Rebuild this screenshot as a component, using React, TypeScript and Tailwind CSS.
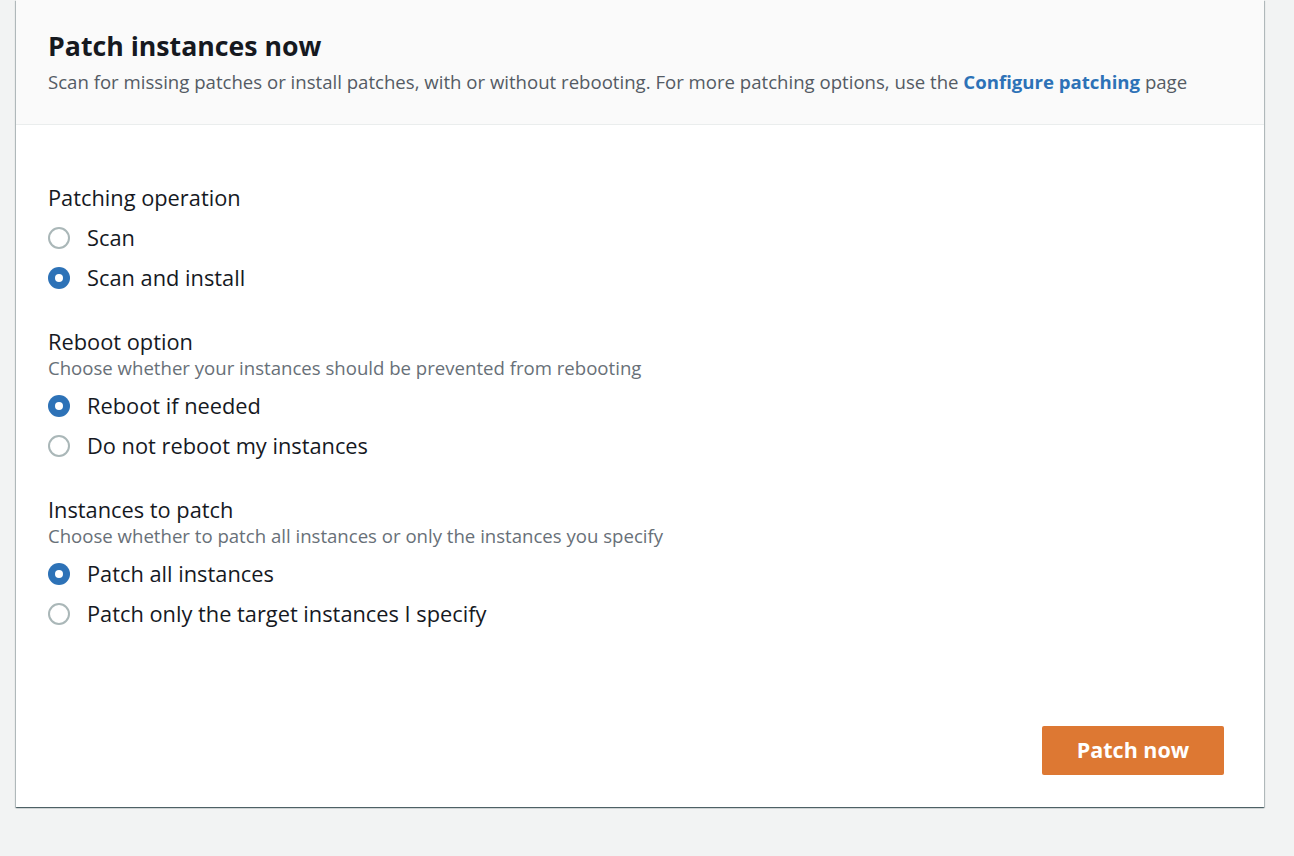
import { useState } from 'react';

type Option = { value: string; label: string };

function Radio({ checked, label, onClick }: { checked: boolean; label: string; onClick: () => void }) {
  return (
    <button type="button" onClick={onClick} className="flex h-[40px] items-center text-left">
      {checked ? (
        <span className="flex h-[22px] w-[22px] items-center justify-center rounded-full bg-[#2d72b7]">
          <span className="h-[8px] w-[8px] rounded-full bg-white" />
        </span>
      ) : (
        <span className="h-[22px] w-[22px] rounded-full border-2 border-[#aab7b8] bg-white" />
      )}
      <span className="ml-[17px] text-[21.8px] leading-[28px] text-[#16191f]">{label}</span>
    </button>
  );
}

function RadioGroup({
  title,
  description,
  options,
  value,
  onChange,
}: {
  title: string;
  description?: string;
  options: Option[];
  value: string;
  onChange: (v: string) => void;
}) {
  return (
    <div className="flex flex-col">
      <div className="text-[21.8px] leading-[28px] text-[#16191f]">{title}</div>
      {description && <div className="text-[18.6px] leading-[24px] text-[#687078]">{description}</div>}
      <div className="mt-[6px] flex flex-col">
        {options.map((o) => (
          <Radio key={o.value} checked={value === o.value} label={o.label} onClick={() => onChange(o.value)} />
        ))}
      </div>
    </div>
  );
}

export default function App() {
  const [operation, setOperation] = useState('install');
  const [reboot, setReboot] = useState('reboot');
  const [targets, setTargets] = useState('all');

  return (
    <div className="h-[856px] w-full overflow-hidden bg-[#f2f3f3] font-['Open_Sans',sans-serif]">
      <div className="ml-[16px] w-[1248px] bg-white shadow-[0_1px_1px_0_rgba(0,28,36,0.5),1px_1px_1px_0_rgba(0,28,36,0.2),-1px_1px_1px_0_rgba(0,28,36,0.2)]">
        {/* Header */}
        <div className="border-b border-[#eaeded] bg-[#fafafa] px-[32px] pt-[28px] pb-[29px]">
          <h2 className="text-[26.7px] font-bold leading-[36px] text-[#16191f]">Patch instances now</h2>
          <p className="mt-[5px] text-[18.6px] leading-[26px] text-[#545b64]">
            Scan for missing patches or install patches, with or without rebooting. For more patching options, use the{' '}
            <a href="#" className="font-bold text-[#2d72b7]">
              Configure patching
            </a>{' '}
            page
          </p>
        </div>

        {/* Body */}
        <div className="flex flex-col gap-[30px] px-[32px] pt-[59px]">
          <RadioGroup
            title="Patching operation"
            options={[
              { value: 'scan', label: 'Scan' },
              { value: 'install', label: 'Scan and install' },
            ]}
            value={operation}
            onChange={setOperation}
          />
          <RadioGroup
            title="Reboot option"
            description="Choose whether your instances should be prevented from rebooting"
            options={[
              { value: 'reboot', label: 'Reboot if needed' },
              { value: 'none', label: 'Do not reboot my instances' },
            ]}
            value={reboot}
            onChange={setReboot}
          />
          <RadioGroup
            title="Instances to patch"
            description="Choose whether to patch all instances or only the instances you specify"
            options={[
              { value: 'all', label: 'Patch all instances' },
              { value: 'target', label: 'Patch only the target instances I specify' },
            ]}
            value={targets}
            onChange={setTargets}
          />
        </div>

        {/* Footer */}
        <div className="flex justify-end pt-[92px] pr-[40px] pb-[32px]">
          <button
            type="button"
            className="h-[49px] w-[182px] rounded-[2px] bg-[#dd7833] text-[21.5px] font-bold text-white"
          >
            Patch now
          </button>
        </div>
      </div>
    </div>
  );
}
